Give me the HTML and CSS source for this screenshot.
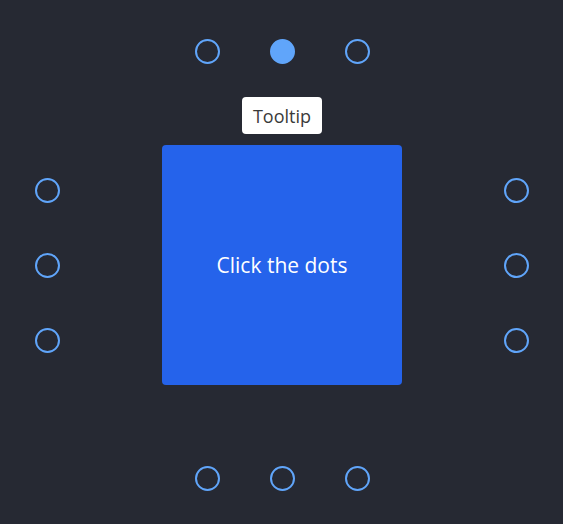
FILE: index.html
```html
<!DOCTYPE html>
<html>
<head>
<meta charset="utf-8">
<link rel="stylesheet" href="styles.css">
</head>
<body>
<div class="stage">
  <div class="row top">
    <span class="dot"></span>
    <span class="dot active"></span>
    <span class="dot"></span>
  </div>
  <div class="col left">
    <span class="dot"></span>
    <span class="dot"></span>
    <span class="dot"></span>
  </div>
  <div class="center">
    <div class="tooltip">Tooltip</div>
    <div class="box">Click the dots</div>
  </div>
  <div class="col right">
    <span class="dot"></span>
    <span class="dot"></span>
    <span class="dot"></span>
  </div>
  <div class="row bottom">
    <span class="dot"></span>
    <span class="dot"></span>
    <span class="dot"></span>
  </div>
</div>
</body>
</html>
```
FILE: styles.css
```css
html, body {
  margin: 0;
  padding: 0;
  background: #262933;
  width: 563px;
  height: 524px;
  overflow: hidden;
  font-family: "Open Sans", "Noto Sans", sans-serif;
}
.stage {
  display: grid;
  grid-template-columns: 25px 240px 25px;
  grid-template-rows: 25px 240px 25px;
  column-gap: 102px;
  row-gap: 81px;
  padding: 39px 0 0 35px;
}
.row {
  grid-column: 2;
  display: flex;
  justify-content: center;
  gap: 50px;
}
.top { grid-row: 1; }
.bottom { grid-row: 3; }
.col {
  grid-row: 2;
  display: flex;
  flex-direction: column;
  justify-content: center;
  gap: 50px;
}
.left { grid-column: 1; }
.right { grid-column: 3; }
.dot {
  display: block;
  width: 25px;
  height: 25px;
  box-sizing: border-box;
  border: 2px solid #60a5fa;
  border-radius: 50%;
}
.dot.active {
  background: #60a5fa;
}
.center {
  grid-column: 2;
  grid-row: 2;
  position: relative;
}
.box {
  width: 240px;
  height: 240px;
  background: #2563eb;
  border-radius: 4px;
  color: #fff;
  display: flex;
  align-items: center;
  justify-content: center;
  font-size: 21px;
}
.tooltip {
  position: absolute;
  left: 80px;
  top: -48px;
  width: 80px;
  height: 37px;
  box-sizing: border-box;
  background: #fff;
  border-radius: 4px;
  color: #3a3a3a;
  font-size: 18px;
  display: flex;
  align-items: center;
  justify-content: center;
}
```
